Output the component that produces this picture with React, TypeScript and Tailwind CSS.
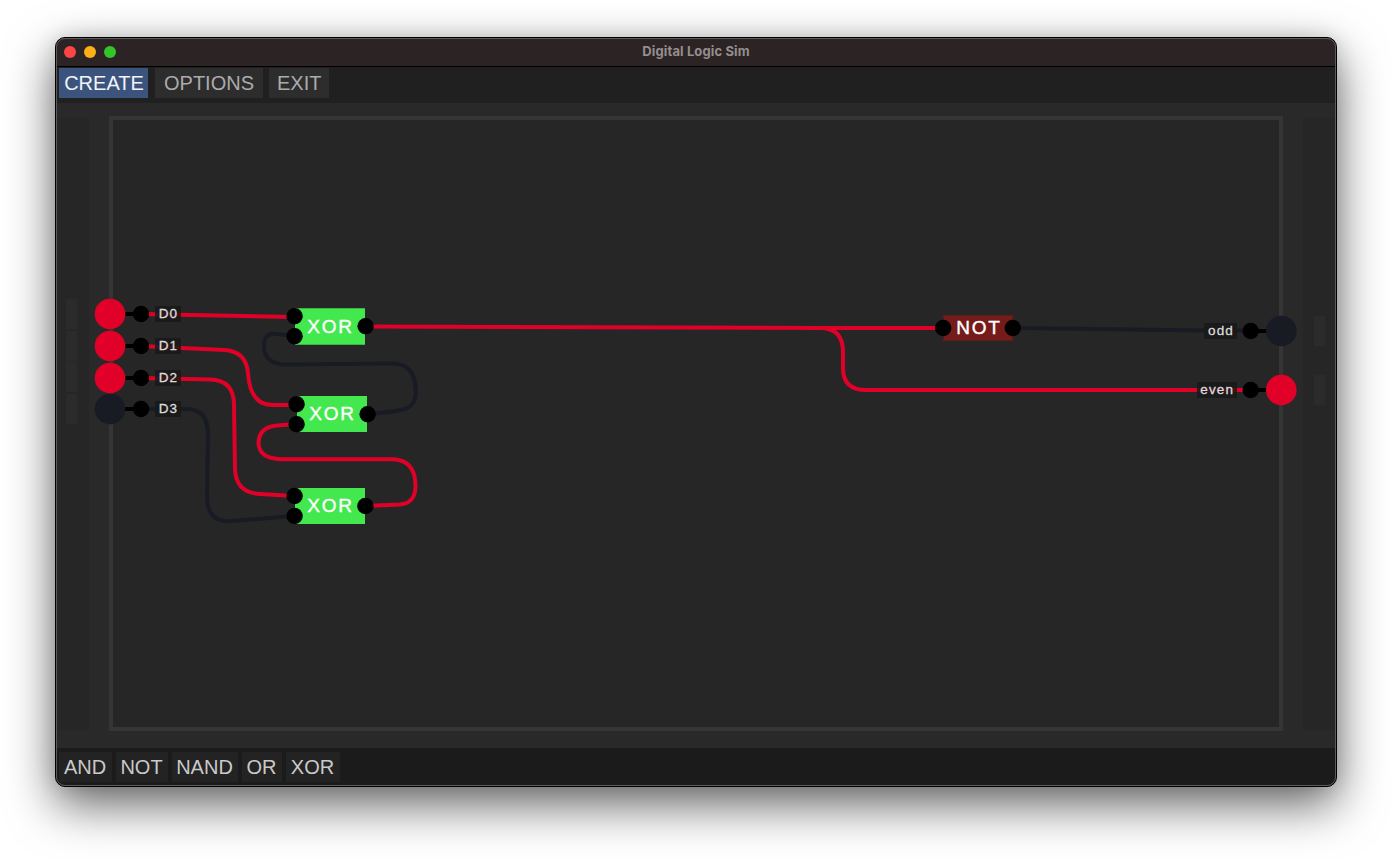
import React from "react";

const RED = "#e00028";
const OFF = "#191b24";

const wires = [
  { on: false, d: "M294 336 L277 334 Q264 332 264 346 Q264 365 288 364.500 L391 363.500 Q410 363 414.500 380 Q420 406 403 409.500 Q392 412 367 414" },
  { on: false, d: "M141 409 H186 Q208 409 208 434 L207 497 Q207 523 232 521 L294 516" },
  { on: false, d: "M1013 328 L1205 330.500 H1251" },
  { on: true, d: "M141 314 L294 317" },
  { on: true, d: "M141 346 L224 350 Q246 351 248 373 Q250 406 274 405 H296" },
  { on: true, d: "M141 378 L210 379.500 Q234 380 234 405 L235 469 Q236 493 260 494 L294 496" },
  { on: true, d: "M296 424 L277 425.500 Q259 427 258.500 443 Q259 459 283 459.300 H391 Q410 459 414.500 476 Q419.500 503 400 504.500 L365 506" },
  { on: true, d: "M365 326.500 L820 328 H943" },
  { on: true, d: "M820 328 Q843 328 843 352 V368 Q843 390 866 390 H1251" },
];

const pins = [
  [141, 314], [141, 346], [141, 378], [141, 409],
  [1250.700, 331], [1250.700, 390],
];

const chipPins = [
  [294.6, 316.3], [294.6, 336.3], [365.6, 326.3],
  [296.6, 404.3], [296.6, 424.2], [367.6, 414.2],
  [294.6, 496], [294.6, 516], [365.4, 506],
  [943.2, 328], [1012.8, 328],
];

const terminals = [
  { x: 110, y: 314, stub: 141, on: true },
  { x: 110, y: 346, stub: 141, on: true },
  { x: 110, y: 378, stub: 141, on: true },
  { x: 110, y: 409, stub: 141, on: false },
  { x: 1281.300, y: 331, stub: 1251, on: false },
  { x: 1281.300, y: 390, stub: 1251, on: true },
];

function Chip({ className, name }: { className: string; name: string }) {
  return (
    <div className={`absolute flex items-center justify-center text-[19px] font-normal tracking-[1.8px] text-white [-webkit-text-stroke:0.4px_white] ${className}`}>
      {name}
    </div>
  );
}

function PinLabel({ className, children }: { className: string; children: string }) {
  return (
    <div className={`absolute flex h-4 items-center justify-center bg-[#191919]/85 pl-px text-[13.5px] font-normal tracking-[1.2px] text-[#dcdcdc] [-webkit-text-stroke:0.3px_#dcdcdc] ${className}`}>
      {children}
    </div>
  );
}

function Circuit() {
  return (
    <>
      <svg className="absolute inset-0 h-full w-full" viewBox="56 103 1280 645" fill="none">
        {wires.map((w) => (
          <path key={w.d} d={w.d} stroke={w.on ? RED : OFF} strokeWidth="4" strokeLinejoin="round" />
        ))}
        {terminals.map((t) => (
          <g key={`${t.x}-${t.y}`}>
            <path d={`M${t.x} ${t.y}H${t.stub}`} stroke="#000" strokeWidth="4" />
            <circle cx={t.x} cy={t.y} r="15.300" fill={t.on ? RED : OFF} />
          </g>
        ))}
        {pins.map(([x, y]) => (
          <circle key={`${x}-${y}`} cx={x} cy={y} r="8.200" fill="#000" />
        ))}
      </svg>
      <Chip name="XOR" className="left-[239px] top-[205px] h-[37px] w-[70px] border-y border-[#37b83f] bg-[#43e84e] pl-px pt-px" />
      <Chip name="XOR" className="left-[241px] top-[293px] h-[36px] w-[70px] bg-[#43e84e] pl-px pt-px" />
      <Chip name="XOR" className="left-[239px] top-[385px] h-[36px] w-[70px] bg-[#43e84e] pl-px pt-px" />
      <Chip name="NOT" className="left-[887px] top-[212px] h-[26px] w-[70px] border border-[#611919] bg-[#751b1a] pl-[2px] pt-px" />
      <svg className="absolute inset-0 h-full w-full" viewBox="56 103 1280 645">
        {chipPins.map(([x, y]) => (
          <circle key={`${x}-${y}`} cx={x} cy={y} r="8.200" fill="#000" />
        ))}
      </svg>
      <PinLabel className="left-[99px] top-[203px] w-[26px]">D0</PinLabel>
      <PinLabel className="left-[99px] top-[235px] w-[26px]">D1</PinLabel>
      <PinLabel className="left-[99px] top-[267px] w-[26px]">D2</PinLabel>
      <PinLabel className="left-[99px] top-[298px] w-[26px]">D3</PinLabel>
      <PinLabel className="left-[1148px] top-[220px] w-[33px]">odd</PinLabel>
      <PinLabel className="left-[1140.500px] top-[279px] w-[40.500px]">even</PinLabel>
    </>
  );
}

const tool = "flex h-[30px] items-center justify-center text-[20px]";

export default function App() {
  return (
    <div className="h-[860px] w-[1392px] overflow-hidden bg-white pl-[55px] pt-[37px] font-['Liberation_Sans',Arial,sans-serif]">
      <div className="relative flex h-[750px] w-[1282px] flex-col overflow-visible rounded-[10px] border border-black bg-[#1b1b1b] shadow-[0_18px_48px_rgba(0,0,0,0.6),0_0_20px_rgba(0,0,0,0.12)]">
        <header className="relative flex h-[29px] shrink-0 items-center justify-center rounded-t-[9px] border-b border-black bg-[#2c2424]">
          <div className="absolute left-2 flex gap-2">
            <span className="h-3 w-3 rounded-full bg-[#fc4645]" />
            <span className="h-3 w-3 rounded-full bg-[#fdaf17]" />
            <span className="h-3 w-3 rounded-full bg-[#35c32a]" />
          </div>
          <h1 className="font-['Inter',sans-serif] text-[13px] font-bold tracking-[0.12px] text-[#948e8e]">Digital Logic Sim</h1>
        </header>
        <nav className="flex h-9 shrink-0 bg-[#202020] pl-[3px] pt-px">
          <button className={`${tool} w-[89px] bg-[#3c547d] pl-px text-[#f2f4f8]`}>CREATE</button>
          <button className={`${tool} ml-[6.500px] w-[108px] bg-[#2d2d2d] pl-px text-[#ababab]`}>OPTIONS</button>
          <button className={`${tool} ml-[6.500px] w-[59.500px] bg-[#2d2d2d] pl-px text-[#ababab]`}>EXIT</button>
        </nav>
        <main className="relative flex h-[645px] shrink-0 justify-between bg-[#292929]">
          <aside className="mt-[15px] flex h-[612px] w-[33px] flex-col items-center bg-[#262626] pr-[3px] pt-[181px]">
            <div className="flex flex-col gap-[1.500px]">
              <div className="h-[30px] w-[11px] bg-[#2b2b2b]" />
              <div className="h-[30px] w-[11px] bg-[#2b2b2b]" />
              <div className="h-[30px] w-[11px] bg-[#2b2b2b]" />
              <div className="h-[30px] w-[11px] bg-[#2b2b2b]" />
            </div>
          </aside>
          <section className="mt-[13px] h-[615px] w-[1174px] border-4 border-[#353535] bg-[#262626]" />
          <aside className="mt-[15px] flex h-[612px] w-[33px] flex-col items-center gap-[29px] bg-[#262626] pt-[198px]">
            <div className="h-[30px] w-[11px] bg-[#2b2b2b]" />
            <div className="h-[30px] w-[11px] bg-[#2b2b2b]" />
          </aside>
          <Circuit />
        </main>
        <footer className="flex flex-1 gap-1 rounded-b-[9px] bg-[#1b1b1b] pl-[2.500px] pt-[3.500px] text-[#cacaca]">
          <button className={`${tool} w-[53px] bg-[#232323]`}>AND</button>
          <button className={`${tool} w-[52px] bg-[#232323]`}>NOT</button>
          <button className={`${tool} w-[66px] bg-[#232323]`}>NAND</button>
          <button className={`${tool} w-[40px] bg-[#232323]`}>OR</button>
          <button className={`${tool} w-[54px] bg-[#232323]`}>XOR</button>
        </footer>
        <div className="pointer-events-none absolute inset-0 rounded-[9px] border border-[#5c5a5a]" />
      </div>
    </div>
  );
}
